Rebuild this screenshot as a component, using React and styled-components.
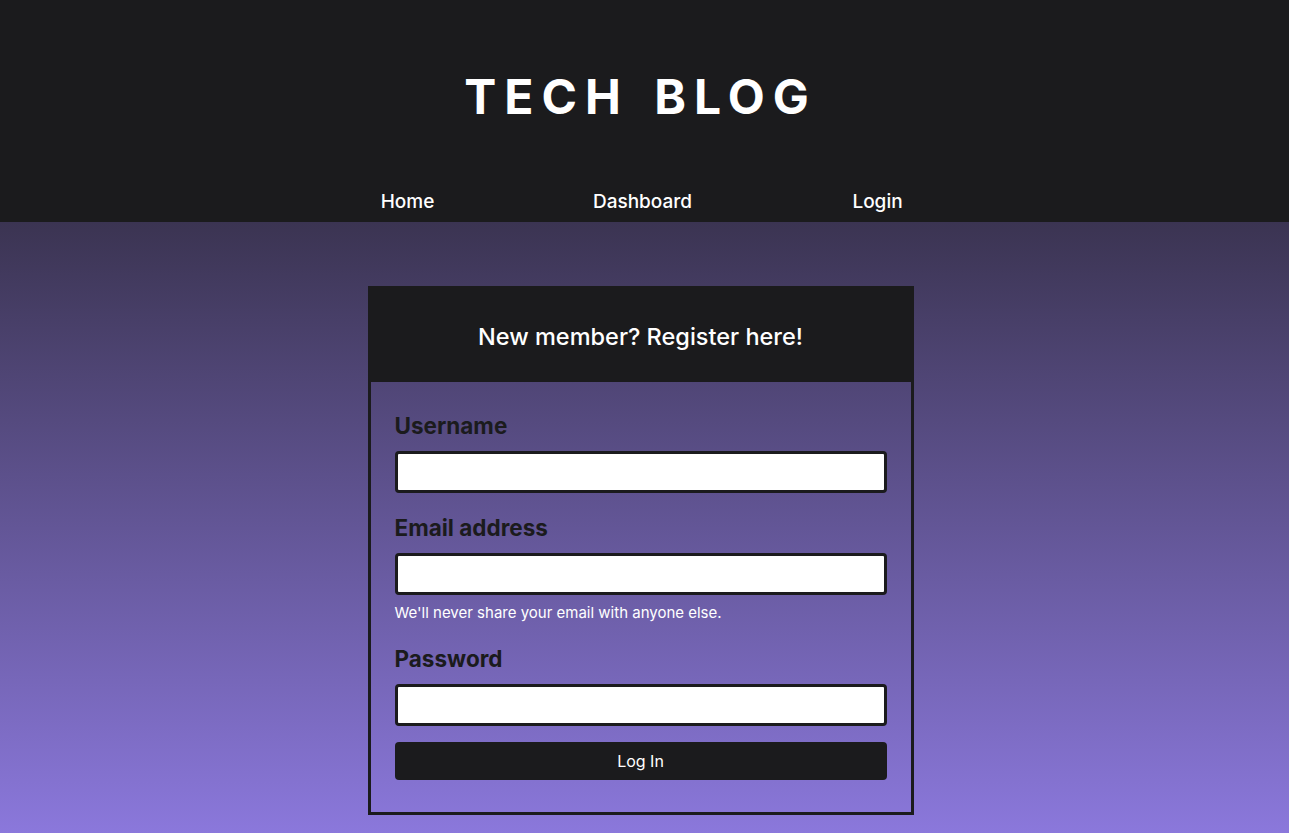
import React from "react";
import styled, { createGlobalStyle } from "styled-components";

const GlobalStyle = createGlobalStyle`
  html, body {
    margin: 0;
    padding: 0;
  }
  body {
    font-family: Inter, "Noto Sans", "Liberation Sans", sans-serif;
    background: #8b78dc;
  }
  * {
    box-sizing: border-box;
  }
`;

const Page = styled.div`
  min-height: 833px;
  display: flex;
  flex-direction: column;
  background: linear-gradient(180deg, #3b3452 222px, #8b78dc 100%);
`;

const Header = styled.header`
  background-color: #1b1b1d;
  height: 222px;
  display: flex;
  flex-direction: column;
  align-items: center;
  padding: 68px 8px 0 0;
`;

const Title = styled.h1`
  margin: 0;
  color: #fff;
  font-size: 48px;
  line-height: 58px;
  font-weight: 700;
  letter-spacing: 8px;
  word-spacing: 6px;
`;

const Nav = styled.nav`
  display: flex;
  margin-top: 64px;
  margin-right: -4px;
`;

const NavLink = styled.a`
  width: 235px;
  text-align: center;
  color: #fff;
  font-size: 19px;
  line-height: 24px;
  font-weight: 500;
  text-decoration: none;
`;

const Main = styled.main`
  display: flex;
  justify-content: center;
  padding: 64px 8px 20px 0;
`;

const Card = styled.div`
  width: 546px;
  border: 3px solid #1b1b1d;
`;

const CardHeader = styled.div`
  background-color: #1b1b1d;
  height: 93px;
  display: flex;
  align-items: center;
  justify-content: center;
  color: #fff;
  font-size: 23.5px;
  font-weight: 500;
  padding-top: 2px;
`;

const CardBody = styled.form`
  display: flex;
  flex-direction: column;
  padding: 31px 24px 32px;
`;

const Label = styled.label`
  color: #1b1b1d;
  font-size: 22.5px;
  line-height: 26px;
  font-weight: 700;
  margin-top: ${(p) => (p.$first ? "0" : "22px")};
  margin-bottom: 12px;
`;

const Input = styled.input`
  height: 42px;
  width: 100%;
  border: 3px solid #1b1b1d;
  border-radius: 4px;
  background: #fff;
  outline: none;
`;

const Help = styled.small`
  display: block;
  color: #fff;
  font-size: 15px;
  line-height: 18px;
  margin-top: 9px;
  margin-bottom: 2px;
`;

const Button = styled.button`
  margin-top: 16px;
  height: 38px;
  border: none;
  border-radius: 4px;
  background-color: #1b1b1d;
  color: #fff;
  font-family: inherit;
  font-size: 16px;
`;

export default function App() {
  return (
    <Page>
      <GlobalStyle />
      <Header>
        <Title>TECH BLOG</Title>
        <Nav>
          <NavLink href="#">Home</NavLink>
          <NavLink href="#">Dashboard</NavLink>
          <NavLink href="#">Login</NavLink>
        </Nav>
      </Header>
      <Main>
        <Card>
          <CardHeader>New member? Register here!</CardHeader>
          <CardBody onSubmit={(e) => e.preventDefault()}>
            <Label $first>Username</Label>
            <Input type="text" />
            <Label>Email address</Label>
            <Input type="email" />
            <Help>We'll never share your email with anyone else.</Help>
            <Label>Password</Label>
            <Input type="password" />
            <Button type="submit">Log In</Button>
          </CardBody>
        </Card>
      </Main>
    </Page>
  );
}
